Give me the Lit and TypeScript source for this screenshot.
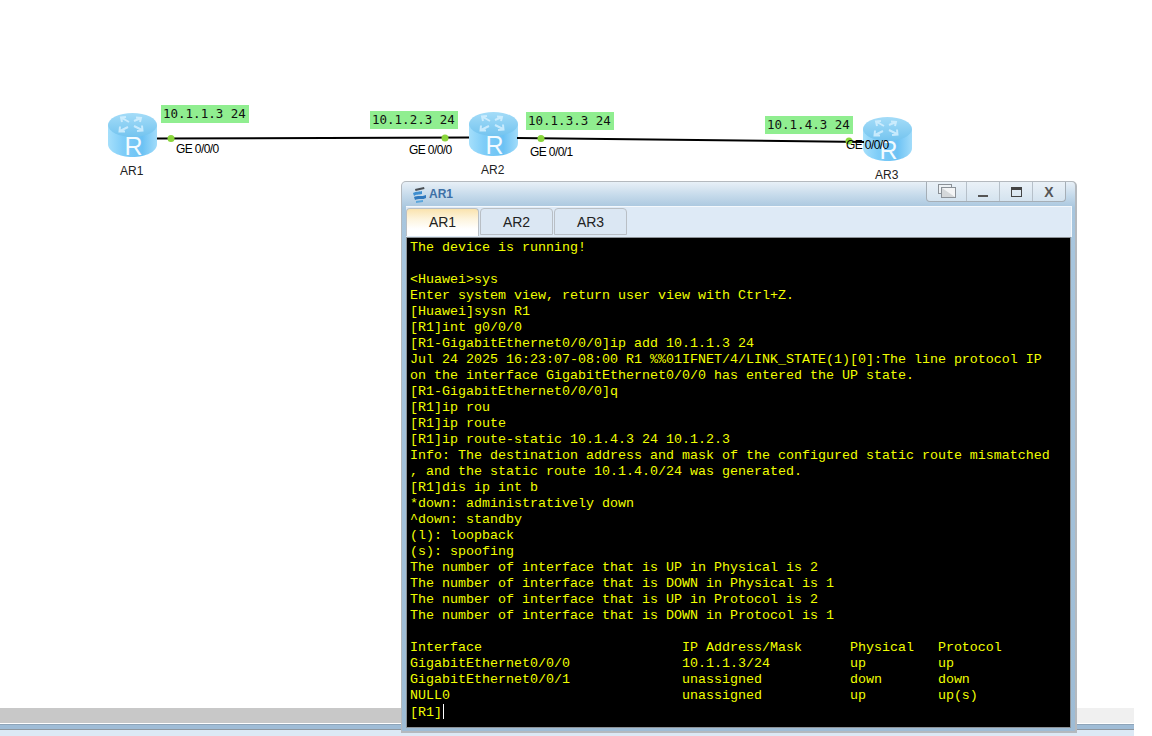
import { LitElement, css, html, svg } from 'lit'
import { customElement, property } from 'lit/decorators.js'

const TERMINAL = [
  'The device is running!',
  '',
  '<Huawei>sys',
  'Enter system view, return user view with Ctrl+Z.',
  '[Huawei]sysn R1',
  '[R1]int g0/0/0',
  '[R1-GigabitEthernet0/0/0]ip add 10.1.1.3 24',
  'Jul 24 2025 16:23:07-08:00 R1 %%01IFNET/4/LINK_STATE(1)[0]:The line protocol IP',
  'on the interface GigabitEthernet0/0/0 has entered the UP state.',
  '[R1-GigabitEthernet0/0/0]q',
  '[R1]ip rou',
  '[R1]ip route',
  '[R1]ip route-static 10.1.4.3 24 10.1.2.3',
  'Info: The destination address and mask of the configured static route mismatched',
  ', and the static route 10.1.4.0/24 was generated.',
  '[R1]dis ip int b',
  '*down: administratively down',
  '^down: standby',
  '(l): loopback',
  '(s): spoofing',
  'The number of interface that is UP in Physical is 2',
  'The number of interface that is DOWN in Physical is 1',
  'The number of interface that is UP in Protocol is 2',
  'The number of interface that is DOWN in Protocol is 1',
  '',
  'Interface                         IP Address/Mask      Physical   Protocol',
  'GigabitEthernet0/0/0              10.1.1.3/24          up         up',
  'GigabitEthernet0/0/1              unassigned           down       down',
  'NULL0                             unassigned           up         up(s)',
].join('\n')

const ROUTERS = [
  { name: 'AR1', x: 108, y: 113, lx: 120, ly: 164 },
  { name: 'AR2', x: 469, y: 112, lx: 481, ly: 163 },
  { name: 'AR3', x: 863, y: 117, lx: 875, ly: 168 },
]

const ADDRS = [
  { text: '10.1.1.3 24', x: 161, y: 105 },
  { text: '10.1.2.3 24', x: 370, y: 111 },
  { text: '10.1.3.3 24', x: 526, y: 112 },
  { text: '10.1.4.3 24', x: 765, y: 116 },
]

const PORTS = [
  { text: 'GE 0/0/0', x: 176, y: 142 },
  { text: 'GE 0/0/0', x: 409, y: 143 },
  { text: 'GE 0/0/1', x: 530, y: 145 },
  { text: 'GE 0/0/0', x: 846, y: 138 },
]

const DOTS = [
  [171, 138.5],
  [445, 138],
  [541, 138.5],
  [849, 141],
]

const routerIcon = svg`
  <svg class="router" viewBox="0 0 49 50" width="49" height="50">
    <defs>
      <linearGradient id="side" x1="0" x2="1" y1="0" y2="0">
        <stop offset="0" stop-color="#a5dffb" />
        <stop offset="0.3" stop-color="#7fcdf8" />
        <stop offset="0.7" stop-color="#6cc2f4" />
        <stop offset="1" stop-color="#a2dcfa" />
      </linearGradient>
      <linearGradient id="top" x1="0" x2="0" y1="0" y2="1">
        <stop offset="0" stop-color="#a4dcf8" />
        <stop offset="1" stop-color="#74c4ef" />
      </linearGradient>
    </defs>
    <path d="M0 12 V31 C0 38.5 11 44 24.5 44 S49 38.5 49 31 V12 Z" fill="url(#side)" />
    <ellipse cx="24.5" cy="12" rx="24.5" ry="12" fill="url(#top)" />
    <g fill="none" stroke="#d4f0ff" stroke-width="2" opacity="0.85">
      <path d="M21 9 L14 5 M14 9 L13 4.5 L18 4" />
      <path d="M26 8 L33 5 M28 4.5 L33 5 L32 9" />
      <path d="M20 14 L12 18 M12 13.5 L11.5 18.5 L17 18.5" />
      <path d="M26 13 L34 17 M34 12.5 L34.5 17.5 L29 18" />
    </g>
    <text x="25.5" y="42" text-anchor="middle" class="r">R</text>
  </svg>
`

@customElement('topo-canvas')
export class TopoCanvas extends LitElement {
  static styles = css`
    :host {
      display: block;
      position: relative;
      height: 708px;
      background: #fff;
      font-family: 'Liberation Sans', Arial, sans-serif;
    }
    .links {
      position: absolute;
      inset: 0;
    }
    .node {
      position: absolute;
      line-height: 0;
    }
    .router .r {
      font-family: 'Liberation Sans', Arial, sans-serif;
      font-size: 25px;
      fill: #f2fbff;
    }
    .name {
      position: absolute;
      font-size: 12px;
      line-height: 14px;
      color: #222;
    }
    .addr {
      position: absolute;
      width: 88px;
      height: 18px;
      box-sizing: border-box;
      padding-left: 2px;
      background: #90ee90;
      font-family: 'DejaVu Sans Mono', monospace;
      font-size: 12.5px;
      line-height: 17px;
      color: #111;
      white-space: pre;
    }
    .port {
      position: absolute;
      font-size: 12px;
      line-height: 14px;
      letter-spacing: -0.6px;
      color: #000;
      white-space: pre;
    }
  `

  render() {
    return html`
      ${ROUTERS.map(
        (r) => html`
          <div class="node" style="left:${r.x}px;top:${r.y}px">${routerIcon}</div>
          <div class="name" style="left:${r.lx}px;top:${r.ly}px">${r.name}</div>
        `,
      )}
      <svg class="links" width="1152" height="708">
        <line x1="157" y1="138.6" x2="469" y2="137.6" stroke="#000" stroke-width="2" />
        <line x1="517" y1="138" x2="864" y2="142" stroke="#000" stroke-width="2" />
        ${DOTS.map(([x, y]) => svg`<circle cx=${x} cy=${y} r="3.5" fill="#8ad63c" />`)}
      </svg>
      ${ADDRS.map(
        (a) => html`<div class="addr" style="left:${a.x}px;top:${a.y}px">${a.text}</div>`,
      )}
      ${PORTS.map(
        (p) => html`<div class="port" style="left:${p.x}px;top:${p.y}px">${p.text}</div>`,
      )}
    `
  }
}

@customElement('console-window')
export class ConsoleWindow extends LitElement {
  @property({ type: String }) active = 'AR1'

  static styles = css`
    :host {
      display: flex;
      flex-direction: column;
      position: absolute;
      left: 401px;
      top: 181px;
      width: 676px;
      height: 552px;
      box-sizing: border-box;
      padding: 0 4px 3px;
      border: 1px solid #b4b9be;
      border-right-width: 2px;
      border-bottom-width: 2px;
      border-radius: 5px 5px 0 0;
      background: linear-gradient(180deg, #e8f0f7 0, #c4d9ea 14px, #a8c6de 26px, #9ebcd5 100%);
      font-family: 'Liberation Sans', Arial, sans-serif;
    }
    .title {
      display: flex;
      align-items: flex-start;
      height: 24px;
      flex: none;
    }
    .title svg.logo {
      margin: 4px 2px 0 5px;
    }
    .caption {
      margin-top: 5px;
      font-size: 12px;
      line-height: 15px;
      font-weight: bold;
      color: #3e70a6;
    }
    .buttons {
      display: flex;
      margin-left: auto;
      margin-right: 5px;
      height: 19px;
      border: 1px solid #a5aeb6;
      border-top: none;
      border-radius: 0 0 4px 4px;
      background: linear-gradient(180deg, #eaf1f7, #d4e3ef);
    }
    .btn {
      width: 32px;
      display: flex;
      align-items: center;
      justify-content: center;
      border-left: 1px solid #b6c0c9;
      font-size: 14px;
      font-weight: bold;
      color: #555;
    }
    .btn:first-child {
      width: 39px;
      border-left: none;
    }
    .tabs {
      display: flex;
      gap: 1px;
      flex: none;
      height: 31px;
      box-sizing: border-box;
      padding: 1px 0 0 0;
      background: #deeaf6;
      border-top: 1px solid #f4f8fc;
      border-right: 1px solid #f4f8fc;
      margin-right: -1px;
    }
    .tab {
      width: 73px;
      height: 27px;
      box-sizing: border-box;
      border: 1px solid #b9bfc5;
      border-radius: 4px 4px 0 0;
      background: #dbe7f3;
      text-align: center;
      font-size: 14px;
      line-height: 27px;
      color: #222;
    }
    .tab.on {
      background: linear-gradient(180deg, #fae3ae 0, #fdf4dd 10px, #fff 20px);
      border-bottom: none;
      height: 28px;
    }
    .screen {
      flex: 1;
      box-sizing: border-box;
      padding: 2px 0 0 3px;
      background: #000;
      border: 1px solid #8d9296;
      overflow: hidden;
    }
    pre {
      margin: 0;
      font-family: 'Liberation Mono', 'Courier New', monospace;
      font-size: 13.33px;
      line-height: 16px;
      color: #f0ff00;
      white-space: pre;
    }
    .cursor {
      display: inline-block;
      width: 1px;
      height: 15px;
      margin-left: 1px;
      vertical-align: -3px;
      background: #fff;
    }
  `

  render() {
    return html`
      <div class="title">
        <svg class="logo" width="16" height="17" viewBox="0 0 16 17">
          <path d="M4 3 L13 1 L13.5 3 L4.5 5 Z" fill="#4a4f55" />
          <path d="M2 7 C5 5 9 6 11 5 L11 8 C8 9 5 8 3 10 Z" fill="#3f8fd0" />
          <path d="M3 11 C6 9 11 11 15 9 L15 12 C12 14 7 12 4 14 Z" fill="#2f78bd" />
          <path d="M5 15 L12 14 L12 16 L5 17 Z" fill="#5aa6dc" />
        </svg>
        <span class="caption">AR1</span>
        <div class="buttons">
          <div class="btn">
            <svg width="20" height="15" viewBox="0 0 20 15">
              <rect x="1.5" y="0.5" width="13" height="9" fill="#eef2f5" stroke="#8b9197" />
              <rect x="4.5" y="3.5" width="14" height="10" fill="#d5d8da" stroke="#8b9197" />
              <path d="M5 4 H18 V13 Z" fill="#f4f5f6" />
            </svg>
          </div>
          <div class="btn">
            <svg width="11" height="10" viewBox="0 0 11 10"><rect x="0" y="8" width="10" height="2" fill="#555" /></svg>
          </div>
          <div class="btn">
            <svg width="11" height="10" viewBox="0 0 11 10">
              <rect x="0.5" y="0.5" width="10" height="9" fill="none" stroke="#444" />
              <rect x="0" y="0" width="11" height="3" fill="#444" />
            </svg>
          </div>
          <div class="btn">X</div>
        </div>
      </div>
      <div class="tabs">
        ${['AR1', 'AR2', 'AR3'].map(
          (t) => html`<div class="tab ${t === this.active ? 'on' : ''}">${t}</div>`,
        )}
      </div>
      <div class="screen"><pre>${TERMINAL}
[R1]<span class="cursor"></span></pre></div>
    `
  }
}

@customElement('app-root')
export class AppRoot extends LitElement {
  static styles = css`
    :host {
      display: block;
      position: relative;
      width: 1152px;
      height: 736px;
      overflow: hidden;
      background: #fff;
    }
    .scrollbar {
      width: 1134px;
      height: 15px;
      background: #f0f0f0;
      border-bottom: 1px solid #fff;
    }
    .thumb {
      width: 420px;
      height: 15px;
      background: #c8c8c8;
    }
    .status {
      width: 1134px;
      height: 12px;
      background: #dce9f5;
    }
    .strip {
      height: 4px;
      background: #9fbcd6;
      border-top: 1px solid #8ea4b8;
      border-bottom: 1px solid #8f979f;
    }
  `

  render() {
    return html`
      <topo-canvas></topo-canvas>
      <div class="scrollbar"><div class="thumb"></div></div>
      <div class="status"><div class="strip"></div></div>
      <console-window></console-window>
    `
  }
}
